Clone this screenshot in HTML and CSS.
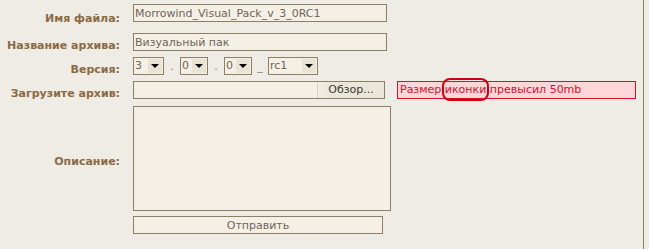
FILE: index.html
```html
<!DOCTYPE html>
<html>
<head>
    <title>Загрузка архива</title>
    <meta charset="utf-8">
    <link rel="stylesheet" href="styles.css">
</head>
<body>
    <div class="page">
        <form class="upload">
            <label class="caption">Имя файла:</label>
            <input class="field name" type="text" value="Morrowind_Visual_Pack_v_3_0RC1">

            <label class="caption">Название архива:</label>
            <input class="field title" type="text" value="Визуальный пак">

            <label class="caption">Версия:</label>
            <div class="version">
                <span class="combo w30"><span class="combo-text">3</span><span class="combo-arrow"></span></span>
                <span class="sep">.</span>
                <span class="combo w27"><span class="combo-text">0</span><span class="combo-arrow"></span></span>
                <span class="sep">.</span>
                <span class="combo w27"><span class="combo-text">0</span><span class="combo-arrow"></span></span>
                <span class="sep">_</span>
                <span class="combo w50"><span class="combo-text">rc1</span><span class="combo-arrow"></span></span>
            </div>

            <label class="caption">Загрузите архив:</label>
            <div class="upload-row">
                <div class="file">
                    <span class="file-path"></span>
                    <span class="file-btn">Обзор...</span>
                </div>
                <div class="error">Размер <span class="mark">иконки</span> превысил 50mb</div>
            </div>

            <label class="caption">Описание:</label>
            <textarea class="field memo"></textarea>

            <span></span>
            <button class="submit" type="button">Отправить</button>
        </form>
    </div>
</body>
</html>
```

FILE: styles.css
```css
body {
    margin: 0;
    background: #efebe5;
    font-family: "DejaVu Sans", Tahoma, sans-serif;
    font-size: 11px;
}
.page {
    width: 643px;
    height: 249px;
    border-right: 1px solid #8c7f66;
}
.upload {
    display: grid;
    grid-template-columns: 120px 1fr;
    column-gap: 13px;
    align-items: center;
    padding-top: 4px;
}
.caption {
    text-align: right;
    font-weight: bold;
    color: #8a6a42;
}
.field {
    box-sizing: border-box;
    height: 18px;
    margin: 0;
    padding: 0 1px;
    border: 1px solid #8c7f66;
    background: #f5f0e6;
    color: #6e6658;
    font-family: inherit;
    font-size: 11px;
}
.name {
    width: 254px;
    margin-bottom: 11px;
}
.title {
    width: 254px;
    margin-bottom: 6px;
}
.version {
    display: flex;
    align-items: center;
    height: 18px;
    margin-bottom: 6px;
}
.combo {
    box-sizing: border-box;
    display: flex;
    height: 18px;
    padding: 1px;
    border: 1px solid #8c7f66;
    background: #f5f0e6;
    color: #6e6658;
}
.w30 { width: 31px; }
.w27 { width: 28px; }
.w50 { width: 50px; }
.combo-text {
    flex: 1;
    line-height: 14px;
}
.combo-arrow {
    width: 14px;
    background: #e9e3d3;
    display: flex;
    align-items: center;
    justify-content: center;
}
.combo-arrow::after {
    content: "";
    border-left: 4px solid transparent;
    border-right: 4px solid transparent;
    border-top: 4px solid #000;
}
.sep {
    width: 16px;
    text-align: center;
    color: #8c7f66;
}
.upload-row {
    display: flex;
    align-items: center;
    gap: 12px;
    margin-bottom: 7px;
}
.file {
    box-sizing: border-box;
    display: flex;
    width: 252px;
    height: 18px;
    border: 1px solid #8c7f66;
    background: #f5f0e6;
}
.file-path {
    flex: 1;
}
.file-btn {
    width: 66px;
    line-height: 16px;
    text-align: center;
    color: #3c3a36;
    background: linear-gradient(to right, #f2eee4, #ebe6da 20%);
    border-left: 1px solid #d8d0c0;
}
.error {
    box-sizing: border-box;
    width: 239px;
    height: 18px;
    line-height: 16px;
    padding-left: 2px;
    border: 1px solid #d3122a;
    background: #ffd6da;
    color: #d3122a;
}
.mark {
    position: relative;
}
.mark::after {
    content: "";
    position: absolute;
    left: -3px;
    right: -3px;
    top: -5px;
    bottom: -5px;
    border: 2px solid #d00010;
    border-radius: 8px;
}
.memo {
    width: 258px;
    height: 105px;
    resize: none;
    margin-bottom: 5px;
}
.submit {
    box-sizing: border-box;
    width: 250px;
    height: 18px;
    padding: 0;
    border: 1px solid #8c7f66;
    background: #f5f0e6;
    color: #6e6658;
    font-family: inherit;
    font-size: 11px;
}
```
